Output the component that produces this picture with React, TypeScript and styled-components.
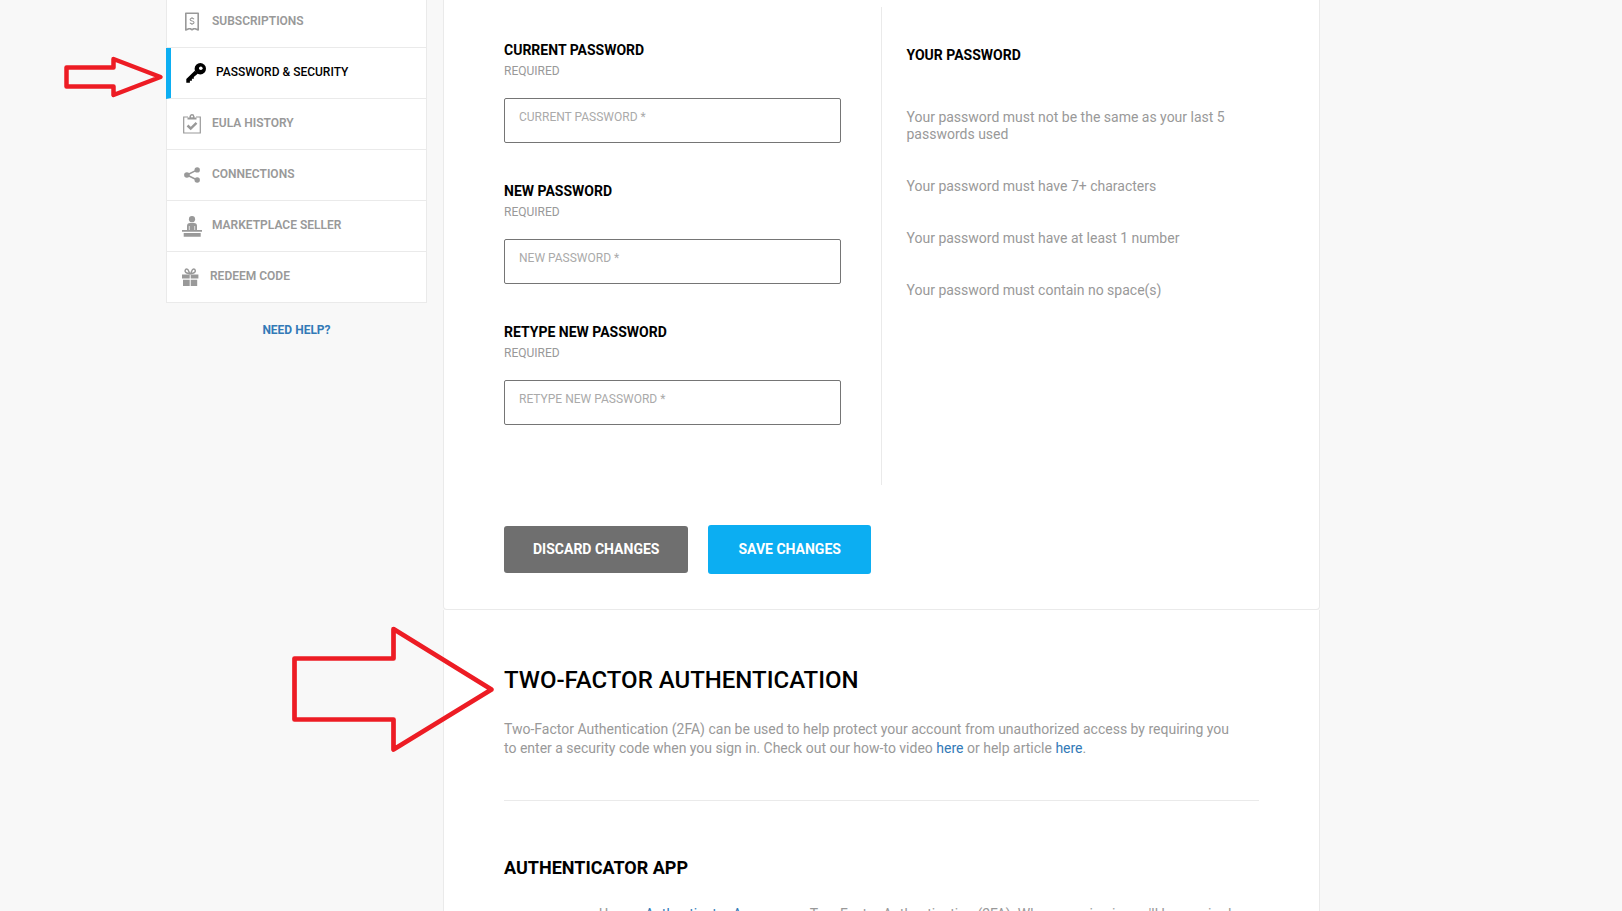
import React from 'react';
import styled, { createGlobalStyle, css } from 'styled-components';

const colors = {
  page: '#f8f8f8',
  panel: '#ffffff',
  line: '#eaeaea',
  muted: '#999999',
  ink: '#000000',
  link: '#337ab7',
  accent: '#0caef2',
  marker: '#ed1c24',
};

const GlobalStyle = createGlobalStyle`
  *, *::before, *::after { box-sizing: border-box; }
  body {
    margin: 0;
    background: ${colors.page};
    color: ${colors.muted};
    font-family: Roboto, "Liberation Sans", sans-serif;
    font-size: 14px;
  }
`;

const Page = styled.div`
  position: relative;
  display: flex;
  align-items: flex-start;
  gap: 16px;
  height: 100vh;
  overflow: hidden;
  padding: 0 302px 0 166px;
`;

const Sidebar = styled.aside`
  flex: none;
  width: 261px;
  margin-top: -3px;
  text-align: center;
`;

const Menu = styled.nav`
  margin-bottom: 17px;
  background: ${colors.panel};
  text-align: left;
`;

const MenuLink = styled.a<{ $active?: boolean }>`
  display: flex;
  align-items: center;
  gap: 10px;
  height: 51px;
  padding: 0 15px 2px;
  border: 1px solid ${colors.line};
  border-top: 0;
  color: ${colors.muted};
  font-size: 12px;
  font-weight: 600;
  text-decoration: none;

  svg {
    flex: none;
    margin-top: 2px;
  }

  ${(p) =>
    p.$active &&
    css`
      border-left: 5px solid ${colors.accent};
      color: ${colors.ink};
      font-weight: 500;
    `}
`;

const HelpLink = styled.a`
  color: ${colors.link};
  font-size: 12px;
  font-weight: 700;
  line-height: 20px;
  text-decoration: none;
`;

const Main = styled.main`
  flex: 1;
  min-width: 0;
`;

const Panel = styled.section`
  padding: 0 60px;
  background: ${colors.panel};
  border: 1px solid ${colors.line};
  border-top: 0;
  border-radius: 0 0 4px 4px;
`;

const PasswordForm = styled.form`
  padding: 7px 0 35px;
`;

const FormColumns = styled.div`
  display: grid;
  grid-template-columns: 1fr 1fr;
`;

const Fields = styled.div`
  display: flex;
  flex-direction: column;
  gap: 37px;
  padding: 32px 40px 60px 0;
  border-right: 1px solid ${colors.line};
`;

const Field = styled.div`
  display: flex;
  flex-direction: column;
`;

const FieldLabel = styled.label`
  color: ${colors.ink};
  font-size: 14px;
  font-weight: 700;
  line-height: 22px;
`;

const FieldHint = styled.span`
  margin-bottom: 17px;
  font-size: 12px;
  line-height: 20px;
`;

const FieldInput = styled.input`
  width: 100%;
  height: 45px;
  padding: 0 14px 7px;
  border: 1px solid #757575;
  border-radius: 2px;
  background: ${colors.panel};
  color: ${colors.ink};
  font-family: inherit;
  font-size: 12px;

  &::placeholder {
    color: #aaaaaa;
    opacity: 1;
  }
`;

const Rules = styled.div`
  padding: 37px 0 0 25px;
`;

const RulesTitle = styled.h3`
  margin: 0 0 43px;
  color: ${colors.ink};
  font-size: 14px;
  font-weight: 700;
  line-height: 22px;
`;

const RuleList = styled.ul`
  display: flex;
  flex-direction: column;
  gap: 35px;
  margin: 0;
  padding: 0;
  list-style: none;
  line-height: 17px;
`;

const Actions = styled.div`
  display: flex;
  align-items: center;
  gap: 20px;
  padding-top: 40px;
`;

const Button = styled.button<{ $primary?: boolean }>`
  height: ${(p) => (p.$primary ? 49 : 47)}px;
  padding: 0 ${(p) => (p.$primary ? 30 : 29)}px 2px;
  border: 0;
  border-radius: 3px;
  background: ${(p) => (p.$primary ? colors.accent : '#6f6f6f')};
  color: #ffffff;
  font-family: inherit;
  font-size: 14px;
  font-weight: 700;
`;

const SectionTitle = styled.h2`
  margin: 0;
  padding-top: 55px;
  color: ${colors.ink};
  font-size: 24px;
  font-weight: 500;
  line-height: 30px;
`;

const SectionText = styled.p`
  margin: 0;
  padding: 25px 0 42px;
  line-height: 19px;
  border-bottom: 1px solid ${colors.line};
`;

const MethodTitle = styled.h3`
  margin: 0;
  padding-top: 55px;
  color: ${colors.ink};
  font-size: 18px;
  font-weight: 700;
  line-height: 24px;
`;

const MethodText = styled.p`
  margin: 0;
  padding: 25px 0 60px 95px;
  line-height: 19px;
`;

const TextLink = styled.a`
  color: ${colors.link};
  text-decoration: none;
`;

const Markers = styled.svg`
  position: absolute;
  top: 0;
  left: 0;
  pointer-events: none;
`;

const SubscriptionIcon = () => (
  <svg width="20" height="20" viewBox="0 0 20 20" fill="none" stroke="currentColor" aria-hidden="true">
    <path d="M3.800 1.300h12.400v16.700l-3-1.300h-1.500l-1.700 1-1.700-1H6.800l-3 1.300z" strokeWidth="1.600" strokeLinejoin="round" />
    <path d="M12 7.200c-.4-.7-1-1-2-1-1.100 0-1.900.5-1.900 1.400 0 2 3.900.8 3.900 2.800 0 .9-.8 1.400-2 1.400-1 0-1.700-.3-2.100-1M10 5v1.200M10 11.800V13" strokeWidth="1.100" />
  </svg>
);

const KeyIcon = () => (
  <svg width="20" height="20" viewBox="0 0 20 20" fill="currentColor" aria-hidden="true">
    <path d="M8.800 7.800L.3 16v3.800h3.600v-2h2v-2h1.900v-1.900l4.200-3.400z" />
    <circle cx="14.300" cy="5.800" r="5.700" />
    <circle cx="14.800" cy="5.300" r="1.800" fill="#fff" />
  </svg>
);

const ClipboardIcon = () => (
  <svg width="20" height="20" viewBox="0 0 20 20" fill="none" stroke="currentColor" aria-hidden="true">
    <path d="M6 3H1.700v16h16.600V3H14" strokeWidth="1.200" />
    <path d="M5.500 5.500v-2h2a2.500 2.500 0 0 1 5 0h2v2z" fill="currentColor" stroke="none" />
    <circle cx="10" cy="2.400" r="1.700" strokeWidth="1.400" fill="#fff" />
    <path d="M5.500 11.500l3.200 3 5.800-5.700" strokeWidth="2.400" />
  </svg>
);

const ShareIcon = () => (
  <svg width="20" height="20" viewBox="0 0 20 20" fill="currentColor" aria-hidden="true">
    <path d="M15.200 4.900L4.900 10l10.300 5" fill="none" stroke="currentColor" strokeWidth="1.600" />
    <circle cx="4.900" cy="10" r="2.800" />
    <circle cx="15.200" cy="4.900" r="2.700" />
    <circle cx="15.200" cy="15" r="2.700" />
  </svg>
);

const SellerIcon = () => (
  <svg width="20" height="21" viewBox="0 0 20 21" fill="currentColor" aria-hidden="true">
    <circle cx="10" cy="3.200" r="3.100" />
    <path d="M5 14.500V10a3 3 0 0 1 3-3h4a3 3 0 0 1 3 3v4.500z" />
    <path d="M7.300 10v4.500M12.700 10v4.500" stroke="#fff" strokeWidth=".7" />
    <path d="M0 14h20v1.800H0zM1.700 17h17v3.800h-17z" />
  </svg>
);

const GiftIcon = () => (
  <svg width="18" height="20" viewBox="0 0 18 20" fill="currentColor" aria-hidden="true">
    <path d="M0 7.500h7.700v4H0zM8.700 7.500h7.700v4H8.700zM1 12.800h6.700v6.200H1zM8.700 12.800h6.500v6.200H8.700z" />
    <path
      d="M8.200 7C6.500 5.500 7 2 4.700 2 3 2 2.600 4.400 3.800 5.400 5 6.400 7 6.500 8.200 7zm0 0c1.700-1.500 1.200-5 3.500-5 1.700 0 2.100 2.400.9 3.400C11.400 6.400 9.400 6.500 8.200 7z"
      fill="none"
      stroke="currentColor"
      strokeWidth="1.500"
    />
  </svg>
);

const menu = [
  { label: 'SUBSCRIPTIONS', icon: <SubscriptionIcon /> },
  { label: 'PASSWORD & SECURITY', icon: <KeyIcon />, active: true },
  { label: 'EULA HISTORY', icon: <ClipboardIcon /> },
  { label: 'CONNECTIONS', icon: <ShareIcon /> },
  { label: 'MARKETPLACE SELLER', icon: <SellerIcon /> },
  { label: 'REDEEM CODE', icon: <GiftIcon /> },
];

const fields = [
  { id: 'current', label: 'CURRENT PASSWORD' },
  { id: 'new', label: 'NEW PASSWORD' },
  { id: 'retype', label: 'RETYPE NEW PASSWORD' },
];

const rules = [
  'Your password must not be the same as your last 5 passwords used',
  'Your password must have 7+ characters',
  'Your password must have at least 1 number',
  'Your password must contain no space(s)',
];

export default function App() {
  return (
    <>
      <GlobalStyle />
      <Page>
        <Sidebar>
          <Menu aria-label="Account">
            {menu.map((item) => (
              <MenuLink key={item.label} href="#" $active={item.active} aria-current={item.active ? 'page' : undefined}>
                {item.icon}
                {item.label}
              </MenuLink>
            ))}
          </Menu>
          <HelpLink href="#">NEED HELP?</HelpLink>
        </Sidebar>

        <Main>
          <Panel>
            <PasswordForm onSubmit={(e) => e.preventDefault()}>
              <FormColumns>
                <Fields>
                  {fields.map((f) => (
                    <Field key={f.id}>
                      <FieldLabel htmlFor={f.id}>{f.label}</FieldLabel>
                      <FieldHint>REQUIRED</FieldHint>
                      <FieldInput id={f.id} type="password" placeholder={`${f.label} *`} />
                    </Field>
                  ))}
                </Fields>
                <Rules>
                  <RulesTitle>YOUR PASSWORD</RulesTitle>
                  <RuleList>
                    {rules.map((rule) => (
                      <li key={rule}>{rule}</li>
                    ))}
                  </RuleList>
                </Rules>
              </FormColumns>
              <Actions>
                <Button type="reset">DISCARD CHANGES</Button>
                <Button type="submit" $primary>
                  SAVE CHANGES
                </Button>
              </Actions>
            </PasswordForm>
          </Panel>

          <Panel>
            <SectionTitle>TWO-FACTOR AUTHENTICATION</SectionTitle>
            <SectionText>
              Two-Factor Authentication (2FA) can be used to help protect your account from unauthorized access by
              requiring you
              <br />
              to enter a security code when you sign in. Check out our how-to video <TextLink href="#">here</TextLink> or
              help article <TextLink href="#">here</TextLink>.
            </SectionText>
            <MethodTitle>AUTHENTICATOR APP</MethodTitle>
            <MethodText>
              Use an <TextLink href="#">Authenticator App</TextLink> as your Two-Factor Authentication (2FA). When you
              sign in you'll be required
            </MethodText>
          </Panel>
        </Main>

        <Markers width="500" height="760" viewBox="0 0 500 760" fill="none" stroke={colors.marker} strokeLinejoin="round" aria-hidden="true">
          <path d="M66.500 67.500h47V59l47 18-47 18v-8.500h-47z" strokeWidth="4.500" />
          <path d="M294.500 658.500h99V629l98 60.500-98 60v-30h-99z" strokeWidth="4.700" />
        </Markers>
      </Page>
    </>
  );
}
